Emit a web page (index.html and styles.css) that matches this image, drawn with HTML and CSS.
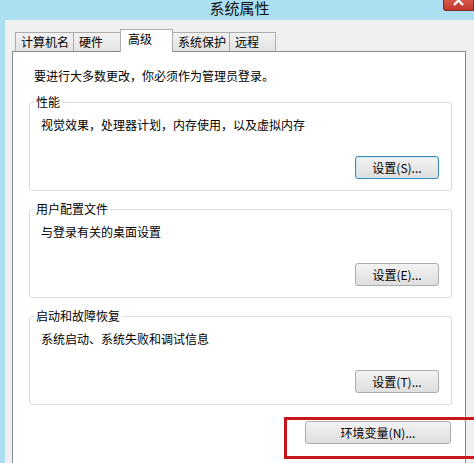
FILE: index.html
```html
<!DOCTYPE html>
<html lang="zh-CN">
<head>
    <meta charset="UTF-8">
    <meta name="viewport" content="width=device-width, initial-scale=1.0">
    <title>系统属性</title>
    <link rel="stylesheet" href="styles.css">
</head>
<body>
    <div class="window">
        <header class="titlebar">
            <span class="title">系统属性</span>
            <span class="close">
                <svg width="31" height="11" viewBox="0 0 31 11">
                    <path d="M11 -3 L20 6 M20 -3 L11 6" stroke="#fff" stroke-width="2.4" fill="none"/>
                </svg>
            </span>
        </header>

        <div class="dialog">
            <ul class="tabs">
                <li class="tab tab-1">计算机名</li>
                <li class="tab tab-2">硬件</li>
                <li class="tab tab-3 active">高级</li>
                <li class="tab tab-4">系统保护</li>
                <li class="tab tab-5">远程</li>
            </ul>

            <div class="panel">
                <p class="intro">要进行大多数更改，你必须作为管理员登录。</p>

                <fieldset class="group">
                    <legend>性能</legend>
                    <p class="desc">视觉效果，处理器计划，内存使用，以及虚拟内存</p>
                    <div class="actions">
                        <button class="btn btn-default">设置(S)...</button>
                    </div>
                </fieldset>

                <fieldset class="group">
                    <legend>用户配置文件</legend>
                    <p class="desc">与登录有关的桌面设置</p>
                    <div class="actions">
                        <button class="btn">设置(E)...</button>
                    </div>
                </fieldset>

                <fieldset class="group">
                    <legend>启动和故障恢复</legend>
                    <p class="desc">系统启动、系统失败和调试信息</p>
                    <div class="actions">
                        <button class="btn">设置(T)...</button>
                    </div>
                </fieldset>

                <div class="footer">
                    <button class="btn btn-wide">环境变量(N)...</button>
                </div>
            </div>
        </div>
    </div>

    <!-- red annotation box around the env variables button -->
    <div class="highlight"></div>
</body>
</html>
```

FILE: styles.css
```css
body {
    margin: 0;
    width: 474px;
    height: 463px;
    overflow: hidden;
    background: #abdff1;
    font-family: "Noto Sans CJK SC", "Microsoft YaHei", sans-serif;
    font-size: 12px;
    color: #000;
    position: relative;
}

.titlebar {
    height: 20px;
    display: flex;
    align-items: flex-start;
}

.title {
    flex: 1;
    text-align: center;
    padding-left: 36px;
    font-size: 15px;
    line-height: 15px;
    color: #111;
}

.close {
    width: 31px;
    height: 11px;
    box-sizing: border-box;
    background: linear-gradient(#d4584c, #c1372b);
    border: 1px solid #7e2a24;
    border-top: none;
    border-radius: 0 0 0 3px;
}

.close svg {
    display: block;
    margin: -1px 0 0 -1px;
}

.dialog {
    margin-left: 5px;
    height: 443px;
    background: #f0f0f0;
    padding-top: 9px;
    box-sizing: border-box;
}

.tabs {
    list-style: none;
    margin: 0;
    padding: 0 0 0 10px;
    display: flex;
    align-items: flex-end;
    height: 22px;
}

.tab {
    box-sizing: border-box;
    height: 19px;
    line-height: 18px;
    padding-left: 5px;
    border: 1px solid #acacac;
    border-bottom: none;
    background: linear-gradient(#f2f2f2, #e3e3e3);
    margin-left: -1px;
    white-space: nowrap;
}

.tab-1 { width: 59px; margin-left: 0; }
.tab-2 { width: 48px; }
.tab-3 { width: 53px; }
.tab-4 { width: 58px; }
.tab-5 { width: 47px; }

.tab.active {
    height: 23px;
    margin-bottom: -1px;
    padding-left: 7px;
    background: #fff;
    position: relative;
    z-index: 1;
}

.panel {
    margin: 0 8px 0 7px;
    height: 430px;
    box-sizing: border-box;
    background: #fff;
    border: 1px solid #868991;
    padding-top: 16px;
}

.intro {
    margin: 0;
    padding-left: 21px;
    line-height: 16px;
}

.group {
    margin: 10px 13px 0 16px;
    padding: 0;
    min-width: 0;
    border: 1px solid #dcdcdc;
    border-radius: 3px;
}

.group legend {
    margin-left: 4px;
    padding: 0 2px;
    line-height: 16px;
}

.desc {
    margin: 7px 0 0 11px;
    line-height: 16px;
}

.actions {
    display: flex;
    justify-content: flex-end;
    padding: 23px 12px 11px 0;
}

.btn {
    width: 84px;
    height: 23px;
    padding: 0;
    box-sizing: border-box;
    font-family: inherit;
    font-size: 12px;
    color: #000;
    border: 1px solid #acacac;
    border-radius: 3px;
    background: linear-gradient(#f3f3f3, #dedede);
}

.btn-default {
    border-color: #3c8ab8;
    box-shadow: inset 0 0 0 1px #cde9f7;
}

.footer {
    display: flex;
    justify-content: flex-end;
    padding: 16px 14px 0 0;
}

.btn-wide {
    width: 146px;
}

.highlight {
    position: absolute;
    left: 284px;
    top: 417px;
    width: 200px;
    height: 42px;
    box-sizing: border-box;
    border: 3px solid #c8161d;
}
```
